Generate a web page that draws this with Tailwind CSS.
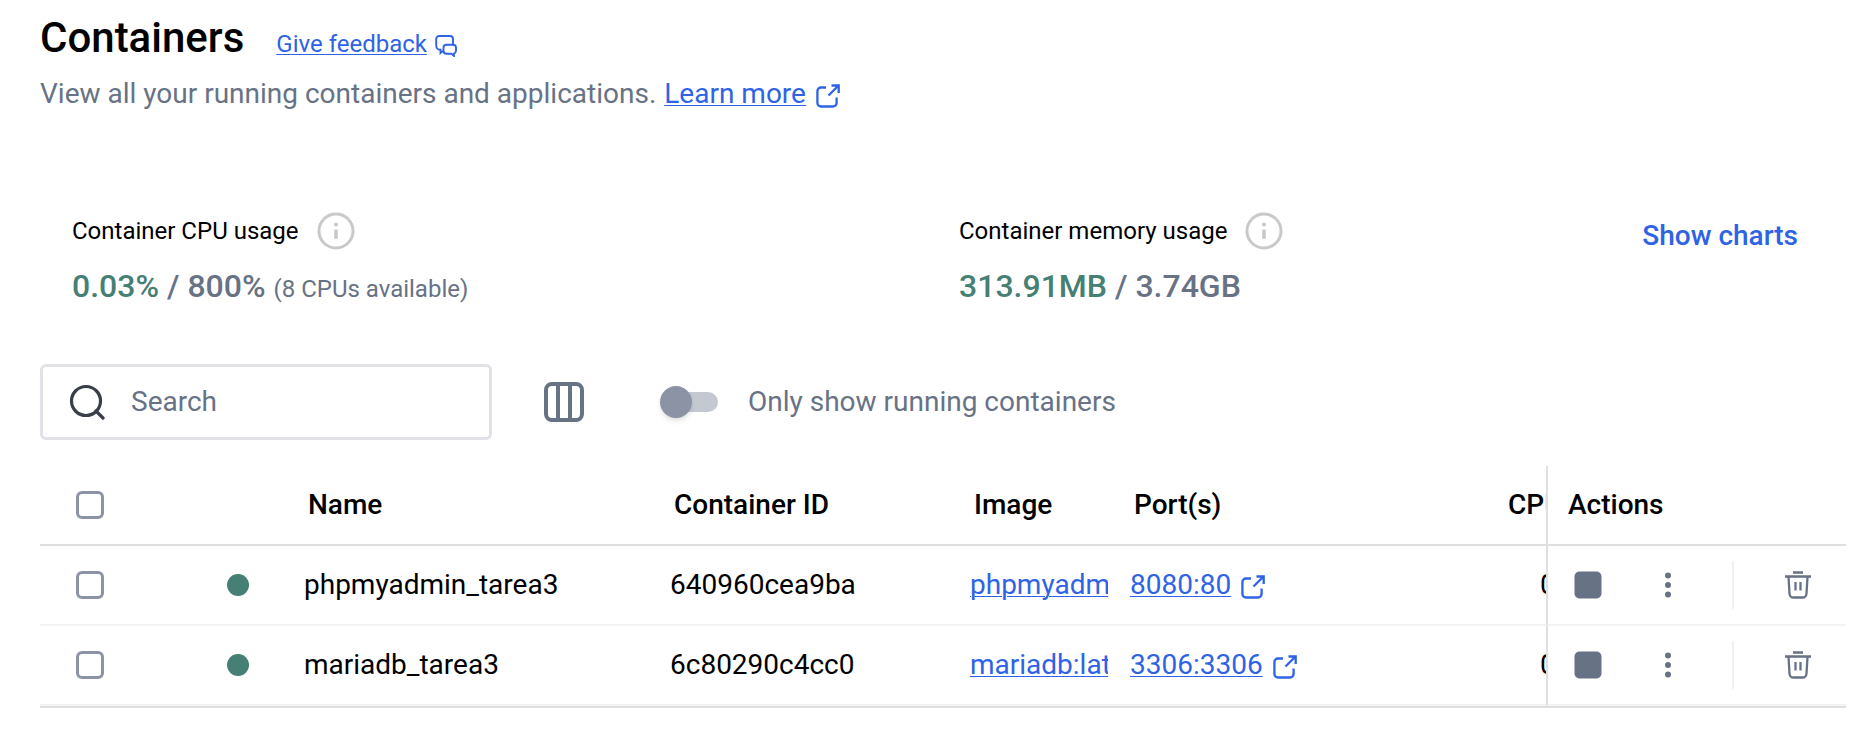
<!DOCTYPE html>
<html lang="en">
<head>
<meta charset="utf-8">
<title>Containers</title>
<script src="https://cdn.jsdelivr.net/npm/@tailwindcss/browser@4"></script>
</head>
<body class="bg-white font-[Roboto,sans-serif] text-[28px] leading-9 text-black">
<svg class="hidden" xmlns="http://www.w3.org/2000/svg">
  <symbol id="external" viewBox="0 0 24 24"><path d="M10 3.500H5a3.600 3.600 0 0 0-3.600 3.600v11.800a3.600 3.600 0 0 0 3.600 3.600h12a3.600 3.600 0 0 0 3.600-3.600V13.500M12.500 11.500 22 2M15.500 1.500H22.700V9" fill="none" stroke="currentColor" stroke-width="2.300"/></symbol>
  <symbol id="info" viewBox="0 0 38 38"><circle cx="19" cy="19" r="17" fill="none" stroke="currentColor" stroke-width="3"/><circle cx="19" cy="12.500" r="2" fill="currentColor"/><path d="M19 19v6.500" stroke="currentColor" stroke-width="3.600" stroke-linecap="round"/></symbol>
  <symbol id="stop" viewBox="0 0 28 28"><rect x=".5" y=".5" width="27" height="27" rx="5" fill="currentColor"/></symbol>
  <symbol id="more" viewBox="0 0 28 28"><g fill="currentColor"><circle cx="14" cy="4.500" r="3"/><circle cx="14" cy="14" r="3"/><circle cx="14" cy="23.500" r="3"/></g></symbol>
  <symbol id="trash" viewBox="0 0 28 28"><path d="M9 1.500h10M1 5.500h26M4.500 6l1 16.500a4 4 0 0 0 4 4h9a4 4 0 0 0 4-4L23.500 6M11.500 11v8.500M16.500 11v8.500" fill="none" stroke="currentColor" stroke-width="2.300"/></symbol>
</svg>
<main class="pt-4 pr-5 pl-10">
  <header>
    <div class="flex items-baseline gap-8">
      <h1 class="text-[42px] leading-11 font-medium">Containers</h1>
      <a href="#" class="flex items-center gap-2 text-2xl leading-7 text-[#2f63e6]"><span class="underline decoration-1 underline-offset-2">Give feedback</span>
        <svg class="mt-1 size-5.5" viewBox="0 0 22 22" fill="none" stroke="currentColor" stroke-width="1.900"><path d="M8.500 15.500 5.500 18v-3.200A4.300 4.300 0 0 1 1.200 10.500V4a3 3 0 0 1 3-3H15a3 3 0 0 1 3 3v5.500M11.500 9.800H18a3 3 0 0 1 3 3v3a3 3 0 0 1-2 2.800V21l-2.500-2.200h-5a3 3 0 0 1-3-3v-3a3 3 0 0 1 3-3Z"/></svg></a>
    </div>
    <p class="mt-4 flex items-center gap-2 text-[#677285]"><span>View all your running containers and applications.</span>
      <a href="#" class="flex items-center gap-2.5 text-[#2f63e6]"><span class="underline decoration-1 underline-offset-2">Learn more</span><svg class="mt-1 size-6"><use href="#external"/></svg></a></p>
  </header>

  <section class="mt-25 flex items-start px-8 pr-12">
    <div class="w-1/2">
      <h2 class="flex items-center gap-4.5 text-2xl leading-9">Container CPU usage <svg class="size-9.5 text-[#c9c9c9]"><use href="#info"/></svg></h2>
      <p class="mt-4 text-[32px] leading-10 font-medium text-[#677285]"><span class="text-[#467f73]">0.03%</span> / 800% <span class="text-2xl font-normal">(8 CPUs available)</span></p>
    </div>
    <div class="grow pl-6">
      <h2 class="flex items-center gap-4.5 text-2xl leading-9">Container memory usage <svg class="size-9.5 text-[#c9c9c9]"><use href="#info"/></svg></h2>
      <p class="mt-4 text-[32px] leading-10 font-medium text-[#677285]"><span class="text-[#467f73]">313.91MB</span> / 3.74GB</p>
    </div>
    <button type="button" class="mt-1.5 font-medium text-[#2f63e6]">Show charts</button>
  </section>

  <section class="mt-14.5 flex items-center">
    <label class="flex h-19 w-113 items-center gap-6.5 rounded-md border-3 border-[#e1e2e7] px-6.5">
      <svg class="size-9 shrink-0 text-[#393f49]" viewBox="0 0 36 36" fill="none" stroke="currentColor" stroke-width="3.200" stroke-linecap="round"><circle cx="17" cy="17" r="14.500"/><path d="m27 27 7 7"/></svg>
      <input type="text" aria-label="Search" placeholder="Search" class="w-full min-w-0 outline-none placeholder:text-[#677285]">
    </label>
    <button type="button" aria-label="Choose columns" class="ml-13 text-[#677285]"><svg class="size-10" viewBox="0 0 40 40" fill="none" stroke="currentColor" stroke-width="4"><rect x="2" y="2" width="36" height="36" rx="6"/><path d="M14 2v36M26 2v36"/></svg></button>
    <label class="ml-19.5 flex items-center gap-7.5 text-[#677285]">
      <input type="checkbox" role="switch" class="relative h-5 w-14 appearance-none rounded-full bg-[#c4c8d1] before:absolute before:-top-1.5 before:-left-0.5 before:size-8 before:rounded-full before:bg-[#8b93a5] before:shadow-md">
      <span>Only show running containers</span>
    </label>
  </section>

  <table class="mt-6.5 w-full table-fixed border-separate border-spacing-0 border-b-2 border-[#dfdfdf] text-left">
    <colgroup><col class="w-35"><col class="w-29"><col class="w-91.5"><col class="w-75"><col class="w-40"><col><col class="w-13.5"><col class="w-75"></colgroup>
    <thead>
      <tr class="h-20 *:border-b-2 *:border-[#dfdfdf] *:font-medium">
        <th class="pl-9"><input type="checkbox" aria-label="Select all containers" class="block size-7 appearance-none rounded-md border-3 border-[#8b93a5]"></th>
        <td></td>
        <th class="px-3">Name</th>
        <th class="px-3">Container ID</th>
        <th class="px-3">Image</th>
        <th class="px-3">Port(s)</th>
        <th class="overflow-hidden pl-4 whitespace-nowrap">CPU (%)</th>
        <th class="border-l-2 pl-5">Actions</th>
      </tr>
    </thead>
    <tbody>
      <tr class="h-20 *:border-b-2 *:border-[#f3f3f3]">
        <td class="pl-9"><input type="checkbox" aria-label="Select phpmyadmin_tarea3" class="block size-7 appearance-none rounded-md border-3 border-[#8b93a5]"></td>
        <td><div role="img" aria-label="Running" class="mx-auto size-5.5 rounded-full bg-[#467f73]"></div></td>
        <td class="px-2">phpmyadmin_tarea3</td>
        <td class="px-2">640960cea9ba</td>
        <td class="pr-3.5 pl-2"><a href="#" class="block overflow-hidden whitespace-nowrap text-[#2f63e6] underline decoration-1 underline-offset-2">phpmyadmin</a></td>
        <td class="px-2"><a href="#" class="flex items-center gap-2.5 text-[#2f63e6]"><span class="underline decoration-1 underline-offset-2">8080:80</span><svg class="mt-1 size-6"><use href="#external"/></svg></a></td>
        <td class="overflow-hidden pl-12 whitespace-nowrap">0%</td>
        <td class="border-l-2 border-l-[#dfdfdf]! pr-5 pl-6.5 text-[#677285]">
          <div class="flex items-center"><button type="button" aria-label="Stop"><svg class="size-7"><use href="#stop"/></svg></button><button type="button" aria-label="More actions" class="ml-13"><svg class="size-7"><use href="#more"/></svg></button><span class="ml-12.5 h-12 w-0.5 bg-[#f0f0f2]"></span><button type="button" aria-label="Delete" class="ml-12.5"><svg class="size-7"><use href="#trash"/></svg></button></div>
        </td>
      </tr>
      <tr class="h-20 *:border-b-2 *:border-[#f3f3f3]">
        <td class="pl-9"><input type="checkbox" aria-label="Select mariadb_tarea3" class="block size-7 appearance-none rounded-md border-3 border-[#8b93a5]"></td>
        <td><div role="img" aria-label="Running" class="mx-auto size-5.5 rounded-full bg-[#467f73]"></div></td>
        <td class="px-2">mariadb_tarea3</td>
        <td class="px-2">6c80290c4cc0</td>
        <td class="pr-3.5 pl-2"><a href="#" class="block overflow-hidden whitespace-nowrap text-[#2f63e6] underline decoration-1 underline-offset-2">mariadb:latest</a></td>
        <td class="px-2"><a href="#" class="flex items-center gap-2.5 text-[#2f63e6]"><span class="underline decoration-1 underline-offset-2">3306:3306</span><svg class="mt-1 size-6"><use href="#external"/></svg></a></td>
        <td class="overflow-hidden pl-12 whitespace-nowrap">0%</td>
        <td class="border-l-2 border-l-[#dfdfdf]! pr-5 pl-6.5 text-[#677285]">
          <div class="flex items-center"><button type="button" aria-label="Stop"><svg class="size-7"><use href="#stop"/></svg></button><button type="button" aria-label="More actions" class="ml-13"><svg class="size-7"><use href="#more"/></svg></button><span class="ml-12.5 h-12 w-0.5 bg-[#f0f0f2]"></span><button type="button" aria-label="Delete" class="ml-12.5"><svg class="size-7"><use href="#trash"/></svg></button></div>
        </td>
      </tr>
    </tbody>
  </table>
</main>
</body>
</html>
